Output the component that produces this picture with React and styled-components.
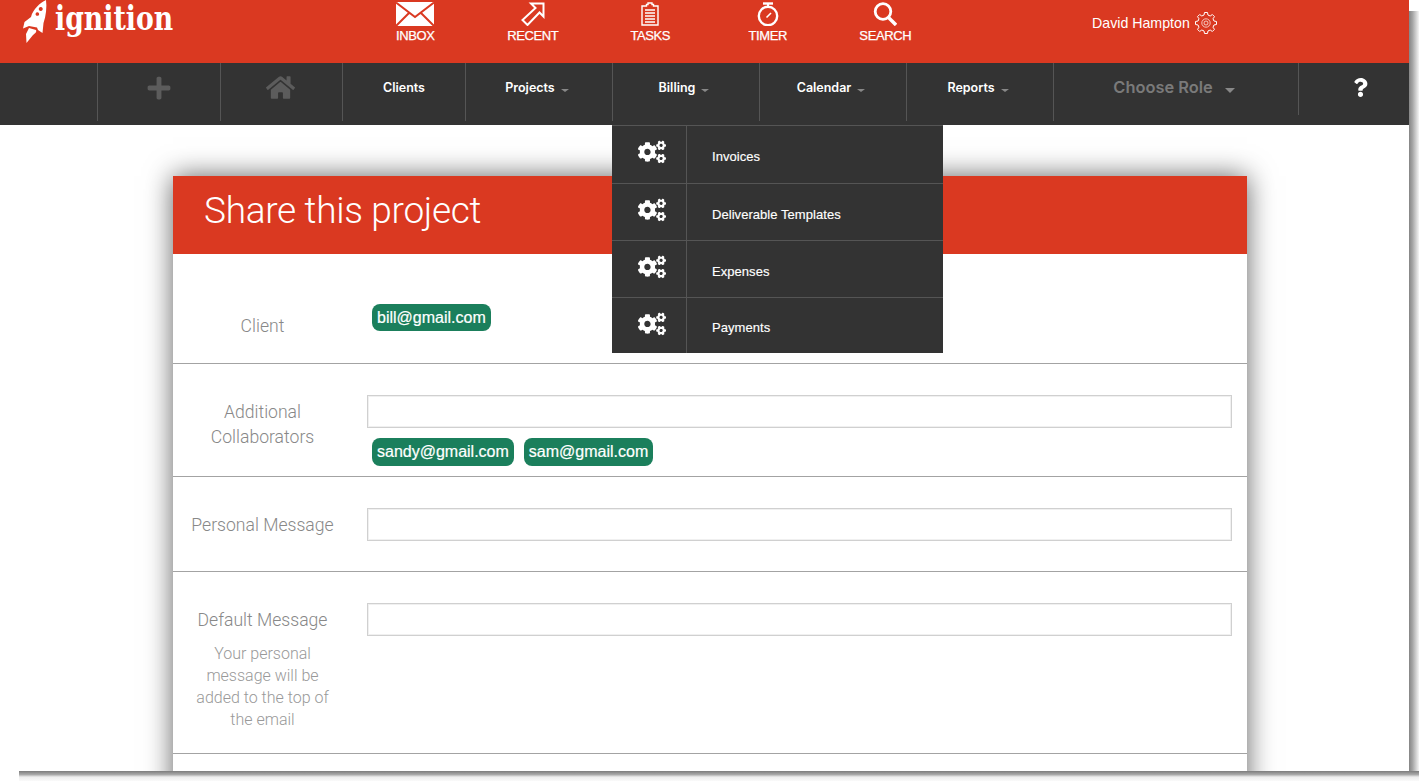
import React from "react";
import styled, { createGlobalStyle } from "styled-components";
import { FaPlus, FaHome, FaCogs, FaQuestion } from "react-icons/fa";

const RED = "#da3921";
const DARK = "#333333";
const LINE = "#555555";

const GlobalStyle = createGlobalStyle`
  html, body {
    margin: 0;
    padding: 0;
    height: 100%;
    background: #fff;
    overflow: hidden;
  }
  * { box-sizing: border-box; }
`;

const Frame = styled.div`
  position: relative;
  width: 1409px;
  height: 771px;
  background: #fff;

  /* the window's hard drop shadow, right and bottom */
  &::before {
    content: "";
    position: absolute;
    left: 1409px;
    top: 11px;
    width: 10px;
    height: 770px;
    background: linear-gradient(90deg, #858585, #a5a5a5 35%, #f5f5f5);
  }
  &::after {
    content: "";
    position: absolute;
    left: 19px;
    top: 771px;
    width: 1400px;
    height: 10px;
    background: linear-gradient(180deg, #7c7c7c, #a8a8a8 35%, #eeeeee 60%, #fafafa);
  }
`;

const Clip = styled.div`
  width: 100%;
  height: 100%;
  overflow: hidden;
  display: flex;
  flex-direction: column;
`;

const TopBar = styled.header`
  height: 63px;
  flex: none;
  background: ${RED};
  display: flex;
  color: #fff;
`;

const Logo = styled.div`
  width: 356.5px;
  flex: none;
  padding-left: 23px;
  display: flex;
  align-items: flex-start;
  gap: 8px;
`;

const LogoText = styled.span`
  font-family: "DejaVu Serif", serif;
  font-weight: 700;
  font-size: 33px;
  line-height: 38px;
  transform: scaleX(0.81);
  transform-origin: left top;
`;

const TopItem = styled.a`
  width: 117.5px;
  flex: none;
  display: flex;
  flex-direction: column;
  align-items: center;
  padding-top: 2px;
  font-family: "Liberation Sans", Arial, sans-serif;
  font-size: 13px;
  line-height: 14px;
  letter-spacing: -0.4px;
  -webkit-text-stroke: 0.25px #fff;

  svg {
    height: 24px;
    display: block;
    margin-bottom: 3px;
  }
`;

const User = styled.div`
  margin-left: 148px;
  height: 45px;
  display: flex;
  align-items: center;
  gap: 5px;
  font-family: "Liberation Sans", Arial, sans-serif;
  font-size: 14.2px;
`;

const MenuBar = styled.nav`
  height: 62px;
  flex: none;
  background: ${DARK};
  display: flex;
  align-items: flex-start;
  position: relative;
  z-index: 2;
`;

const Cell = styled.div`
  position: relative;
  width: ${(p) => p.$w}px;
  flex: none;
  height: ${(p) => p.$h || 58}px;
  border-left: ${(p) => (p.$first ? "none" : `1px solid ${LINE}`)};
  display: flex;
  align-items: center;
  justify-content: center;
  padding-bottom: ${(p) => (p.$h ? 4 : 9)}px;
  padding-left: ${(p) => p.$left || 0}px;
  padding-right: ${(p) => p.$right || 0}px;
  font-family: Inter, sans-serif;
  font-weight: 600;
  font-size: 12.5px;
  color: #fff;
  gap: 6px;
`;

const Caret = styled.i`
  width: 0;
  height: 0;
  margin-top: 5px;
  border-left: ${(p) => (p.$big ? 5 : 4)}px solid transparent;
  border-right: ${(p) => (p.$big ? 5 : 4)}px solid transparent;
  border-top: ${(p) => (p.$big ? 5 : 3)}px solid #888;
`;

const RoleText = styled.span`
  font-size: 16.4px;
  line-height: 20px;
  margin-bottom: 1px;
  color: #7a7a7a;
  margin-right: 6px;
`;

const Dropdown = styled.ul`
  position: absolute;
  left: -1px;
  top: 62px;
  width: 331px;
  margin: 0;
  padding: 0;
  list-style: none;
  background: ${DARK};
  font-family: "Liberation Sans", Arial, sans-serif;
  font-weight: 400;
  font-size: 13px;
  letter-spacing: 0.05px;
  color: #fff;
`;

const DropRow = styled.li`
  height: ${(p) => p.$h}px;
  border-top: 1px solid ${LINE};
  display: flex;
`;

const DropIcon = styled.div`
  width: 75px;
  flex: none;
  border-right: 1px solid ${LINE};
  display: flex;
  justify-content: center;
  padding: 12px 0 0 5px;
  color: #fff;
  font-size: 28px;
`;

const DropLabel = styled.div`
  padding: ${(p) => p.$top}px 0 0 25px;
  line-height: 16px;
  -webkit-text-stroke: 0.15px #fff;
`;

const Content = styled.main`
  padding: 51px 0 0 173px;
`;

const Card = styled.section`
  width: 1074px;
  background: #fff;
  box-shadow: 0 0 26px rgba(0, 0, 0, 0.62);
  font-family: Roboto, "Liberation Sans", sans-serif;
  font-weight: 300;
`;

const CardHead = styled.div`
  height: 78px;
  background: ${RED};
  padding: 12px 0 0 31px;
`;

const Title = styled.h1`
  margin: 0;
  color: #fff;
  font-weight: 300;
  font-size: 37px;
  line-height: 46px;
  letter-spacing: -0.3px;
`;

const Row = styled.div`
  display: grid;
  grid-template-columns: 179px 1fr;
  padding: ${(p) => p.$pad};
  border-bottom: 1px solid #a3a3a3;
`;

const CardEnd = styled.div`
  height: 60px;
`;

const Label = styled.div`
  padding-top: ${(p) => p.$top || 5}px;
  padding-left: ${(p) => p.$side || 0}px;
  padding-right: ${(p) => p.$side || 0}px;
  text-align: center;
  color: #888;
  font-size: 17.6px;
  line-height: 25px;
`;

const Hint = styled.div`
  margin-top: 10px;
  padding: 0 22px;
  font-size: 16px;
  line-height: 22px;
  color: #999;
`;

const Field = styled.div`
  padding: 0 15px 0 15px;
`;

const TextBox = styled.input`
  display: block;
  width: 100%;
  height: 33px;
  border: 1px solid #d0d0d0;
  box-shadow: inset 0 0 0 1px #f0f0f0;
  background: #fff;
  outline: none;
`;

const Pills = styled.div`
  display: flex;
  gap: 10px;
  margin: ${(p) => p.$top || 0}px 0 0 5px;
`;

const Pill = styled.span`
  height: ${(p) => p.$h || 28}px;
  padding: 0 5px;
  border-radius: 8px;
  background: #1b7f5c;
  color: #fff;
  font-family: "Liberation Sans", Arial, sans-serif;
  font-weight: 400;
  font-size: 16px;
  line-height: 28px;
  -webkit-text-stroke: 0.2px #fff;
`;

function Rocket() {
  return (
    <svg width="24" height="44" viewBox="0 0 24 44" style={{ flex: "none" }}>
      <path
        fill="#fff"
        fillRule="evenodd"
        d="M23 0C17 3 10 9 8 17L1.500 22 0 28.500 6 26 14 27.500 15 30 19.500 33 20.500 23C23 16 24 7 23 0ZM17.700 7a2 2 0 1 0 .1 0ZM14.300 12.200a1.800 1.800 0 1 0 .1 0Z"
      />
      <path fill="#fff" d="M6 28 13 30C14 32 12 33.500 10 35L3.500 43 3 34Z" />
    </svg>
  );
}

function EnvelopeIcon() {
  return (
    <svg viewBox="0 0 38 24" width="38">
      <rect width="38" height="24" fill="#fff" />
      <path d="M0 0.500 19 15 38 0.500M0 24 13.500 10.500M38 24 24.500 10.500" fill="none" stroke={RED} strokeWidth="2" />
    </svg>
  );
}

function ArrowIcon() {
  return (
    <svg viewBox="0 0 24 24" width="24">
      <path d="M22.500 1.500H10L14.500 6 1.500 18 6.500 23 18.500 10.500 22.500 14.500Z" fill="none" stroke="#fff" strokeWidth="2" />
    </svg>
  );
}

function ClipboardIcon() {
  return (
    <svg viewBox="0 0 20 24" width="20">
      <path d="M2 4H6.500V2.500H8V1H12V2.500H13.500V4H18V23H2Z" fill="none" stroke="#fff" strokeWidth="1.400" />
      <path d="M5 8H15M5 11H15M5 14H15M5 17H15M5 20H15" stroke="#fff" strokeWidth="1.300" />
    </svg>
  );
}

function TimerIcon() {
  return (
    <svg viewBox="0 0 24 24" width="24">
      <circle cx="12" cy="14" r="9.200" fill="none" stroke="#fff" strokeWidth="2.400" />
      <path d="M7 1.500H17" stroke="#fff" strokeWidth="2.400" />
      <path d="M12 2V5" stroke="#fff" strokeWidth="2" />
      <path d="M10.500 15.500 15 11" stroke="#fff" strokeWidth="1.600" />
    </svg>
  );
}

function SearchIcon() {
  return (
    <svg viewBox="0 0 24 24" width="24">
      <circle cx="10" cy="9.500" r="7.800" fill="none" stroke="#fff" strokeWidth="2.800" />
      <path d="M15.500 15.500 23 23" stroke="#fff" strokeWidth="3.400" />
    </svg>
  );
}

// outlined cog, tooth outline worked out from the angle of each tooth
const cogPath = (() => {
  const teeth = 8;
  const pts = [];
  for (let i = 0; i < teeth; i++) {
    const a = (i / teeth) * Math.PI * 2;
    const s = Math.PI / teeth;
    [
      [8.2, a - s * 0.62],
      [10.6, a - s * 0.36],
      [10.6, a + s * 0.36],
      [8.2, a + s * 0.62],
    ].forEach(([r, t]) => {
      pts.push(`${(11 + r * Math.cos(t)).toFixed(2)} ${(11 + r * Math.sin(t)).toFixed(2)}`);
    });
  }
  return `M${pts.join("L")}Z`;
})();

function CogOutline() {
  return (
    <svg viewBox="0 0 22 22" width="22" height="22" fill="none" stroke="#fff">
      <path d={cogPath} strokeWidth="1" strokeLinejoin="round" />
      <circle cx="11" cy="11" r="4.200" strokeWidth="0.700" />
      <circle cx="11" cy="11" r="2" strokeWidth="0.700" />
    </svg>
  );
}

const topItems = [
  ["INBOX", <EnvelopeIcon key="i" />],
  ["RECENT", <ArrowIcon key="r" />],
  ["TASKS", <ClipboardIcon key="t" />],
  ["TIMER", <TimerIcon key="c" />],
  ["SEARCH", <SearchIcon key="s" />],
];

const billingItems = [
  ["Invoices", 58, 23],
  ["Deliverable Templates", 57, 23],
  ["Expenses", 57, 23],
  ["Payments", 56, 22],
];

export default function App() {
  return (
    <Frame>
      <GlobalStyle />
      <Clip>
        <TopBar>
          <Logo>
            <Rocket />
            <LogoText>ignition</LogoText>
          </Logo>
          {topItems.map(([label, icon]) => (
            <TopItem key={label}>
              {icon}
              {label}
            </TopItem>
          ))}
          <User>
            David Hampton
            <CogOutline />
          </User>
        </TopBar>

        <MenuBar>
          <Cell $first $w={97} />
          <Cell $w={123}>
            <FaPlus size={26} color="#5c5c5c" />
          </Cell>
          <Cell $w={122} $right={3}>
            <FaHome size={29} color="#5c5c5c" />
          </Cell>
          <Cell $w={123}>Clients</Cell>
          <Cell $w={147} $right={4}>
            Projects <Caret />
          </Cell>
          <Cell $w={147} $right={4}>
            Billing <Caret />
            <Dropdown>
              {billingItems.map(([label, h, top]) => (
                <DropRow key={label} $h={h}>
                  <DropIcon>
                    <FaCogs />
                  </DropIcon>
                  <DropLabel $top={top}>{label}</DropLabel>
                </DropRow>
              ))}
            </Dropdown>
          </Cell>
          <Cell $w={147} $right={4}>
            Calendar <Caret />
          </Cell>
          <Cell $w={147} $right={4}>
            Reports <Caret />
          </Cell>
          <Cell $w={245} $right={4}>
            <RoleText>Choose Role</RoleText>
            <Caret $big />
          </Cell>
          <Cell $w={111} $h={52} $left={13}>
            <FaQuestion size={19} />
          </Cell>
        </MenuBar>

        <Content>
          <Card>
            <CardHead>
              <Title>Share this project</Title>
            </CardHead>
            <Row $pad="50px 0 24px">
              <Label $top={10}>Client</Label>
              <Field>
                <Pills>
                  <Pill $h={27}>bill@gmail.com</Pill>
                </Pills>
              </Field>
            </Row>
            <Row $pad="31px 0 10px">
              <Label $side={30}>Additional Collaborators</Label>
              <Field>
                <TextBox />
                <Pills $top={10}>
                  <Pill>sandy@gmail.com</Pill>
                  <Pill>sam@gmail.com</Pill>
                </Pills>
              </Field>
            </Row>
            <Row $pad="31px 0 30px">
              <Label>Personal Message</Label>
              <Field>
                <TextBox />
              </Field>
            </Row>
            <Row $pad="31px 0 22px">
              <Label>
                Default Message
                <Hint>Your personal message will be added to the top of the email</Hint>
              </Label>
              <Field>
                <TextBox />
              </Field>
            </Row>
            <CardEnd />
          </Card>
        </Content>
      </Clip>
    </Frame>
  );
}
